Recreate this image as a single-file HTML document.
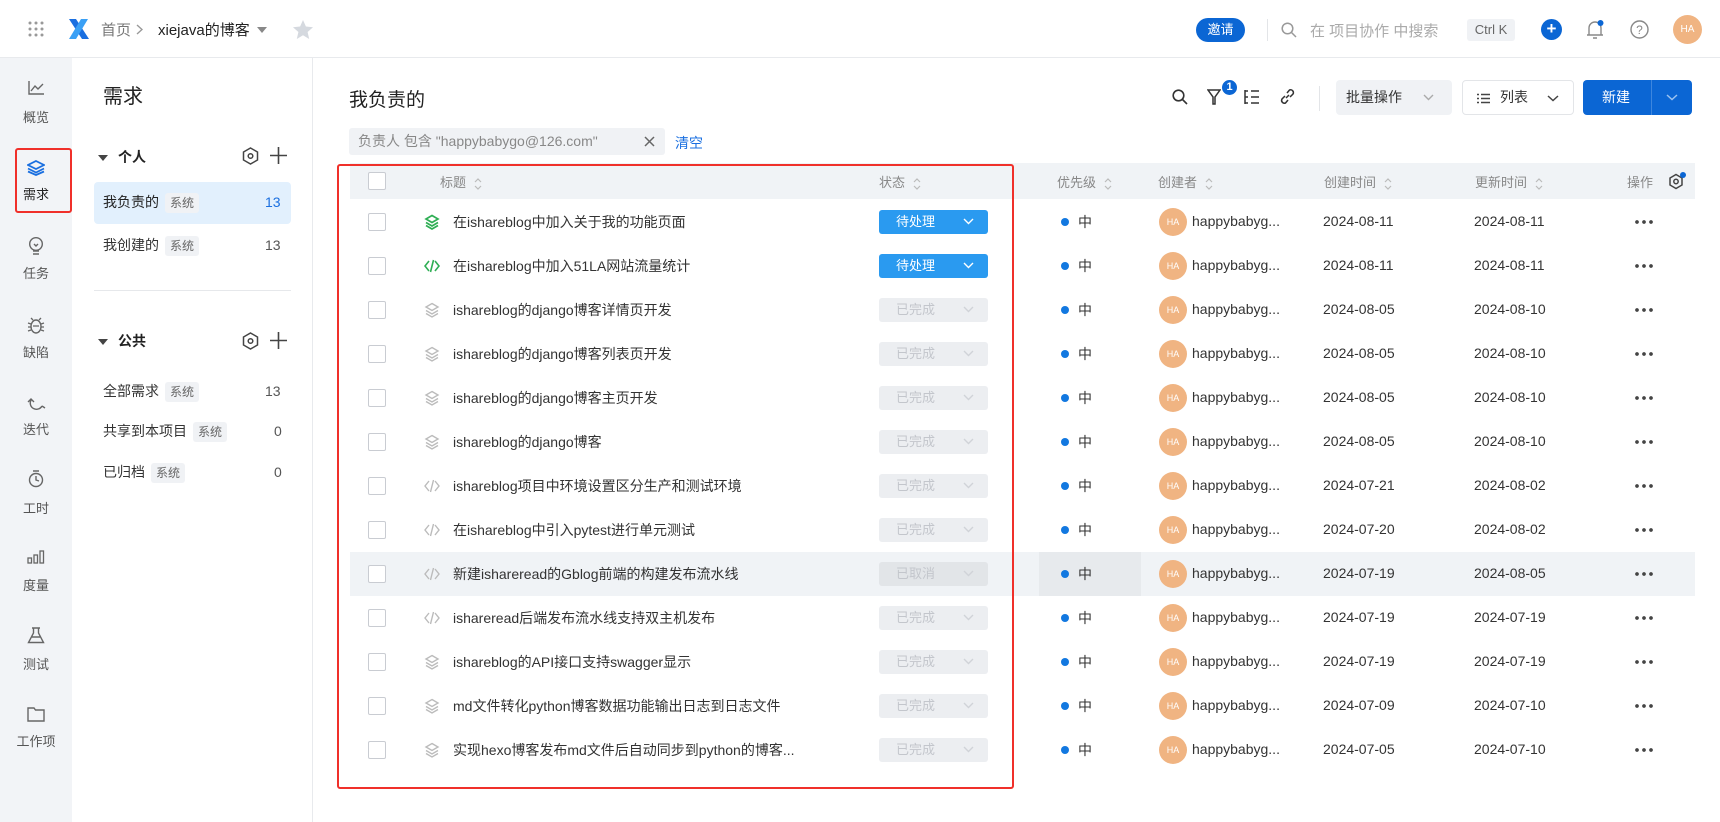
<!DOCTYPE html>
<html><head><meta charset="utf-8">
<style>
*{box-sizing:border-box;margin:0;padding:0}
body{width:1720px;height:822px;overflow:hidden;background:#fff;font-family:"Liberation Sans","Noto Sans CJK SC",sans-serif;color:#333;position:relative;font-size:14px}
.a{position:absolute}
.top{left:0;top:0;width:1720px;height:58px;border-bottom:1px solid #e8eaed;background:#fff}
.rail{left:0;top:58px;width:72px;height:764px;background:#f2f4f7}
.strip{left:0;top:0;width:3px;height:822px;background:linear-gradient(#2b6 0,#234 20%,#3a7 40%,#222 60%,#49c 80%,#333)}
.nav{left:72px;top:58px;width:241px;height:764px;border-right:1px solid #e8eaed;background:#fff}
.ni{width:72px;text-align:center;font-size:13px;color:#555;left:0}
.hdr{left:350px;top:163px;width:1345px;height:36px;background:#f0f3f6;font-size:13px;color:#888}
.row{left:350px;width:1345px;height:44px}
.cb{width:18px;height:18px;border:1px solid #c9ccd2;border-radius:2px;background:#fff;position:absolute;left:18px;top:13px}
.ttl{position:absolute;left:103px;top:12px;font-size:14px;color:#333;white-space:nowrap}
.ic{position:absolute;left:74px;top:14px}
.st{position:absolute;left:529px;top:10px;width:109px;height:24px;border-radius:3px;font-size:13px;line-height:24px;padding-left:17px}
.st.b{background:#2a9af0;color:#fff}
.st.g{background:#eceef1;color:#c3c6cc}
.st svg{position:absolute;right:14px;top:8px}
.dot{position:absolute;left:711px;top:18px;width:8px;height:8px;border-radius:50%;background:#1278e0}
.pr{position:absolute;left:728px;top:12px}
.av{position:absolute;left:809px;top:8px;width:28px;height:28px;border-radius:50%;background:#f0b482;color:#fff;font-size:9px;text-align:center;line-height:28px}
.nm{position:absolute;left:842px;top:13px;color:#333}
.d1{position:absolute;left:973px;top:13px}
.d2{position:absolute;left:1124px;top:13px}
.mo{position:absolute;left:1285px;top:20px;width:18px;height:4px;background:radial-gradient(circle at 2px 2px,#444 1.7px,transparent 2px) 0 0/7px 4px repeat-x}
.sort{display:inline-block;vertical-align:middle;margin-left:8px}
.tag{display:inline-block;background:#f0f2f5;color:#666;font-size:12px;padding:0 5px;border-radius:3px;margin-left:6px;line-height:20px}
</style></head><body>
<div class="a strip"></div>
<div class="a top">
  <svg class="a" style="left:28px;top:21px" width="16" height="16"><g fill="#999"><circle cx="2" cy="2" r="1.5"/><circle cx="8" cy="2" r="1.5"/><circle cx="14" cy="2" r="1.5"/><circle cx="2" cy="8" r="1.5"/><circle cx="8" cy="8" r="1.5"/><circle cx="14" cy="8" r="1.5"/><circle cx="2" cy="14" r="1.5"/><circle cx="8" cy="14" r="1.5"/><circle cx="14" cy="14" r="1.5"/></g></svg>
  <svg class="a" style="left:68px;top:17px" width="22" height="24"><path d="M1 2 L8 2 L21 22 L14 22 Z" fill="#1a6fe0"/><path d="M20 2 L13 2 L1 22 L8 22 Z" fill="#3aa0f5"/></svg>
  <div class="a" style="left:101px;top:19px;font-size:15px;color:#777">首页</div>
  <svg class="a" style="left:136px;top:24px" width="7" height="11"><path d="M1 1 L6 5.5 L1 10" fill="none" stroke="#999" stroke-width="1.4"/></svg>
  <div class="a" style="left:158px;top:19px;font-size:15px;color:#222">xiejava的博客</div>
  <svg class="a" style="left:257px;top:27px" width="10" height="6"><path d="M0 0 L10 0 L5 6Z" fill="#888"/></svg>
  <svg class="a" style="left:293px;top:20px" width="20" height="19"><path d="M10 0 L12.9 6.5 L20 7.2 L14.6 12 L16.2 19 L10 15.3 L3.8 19 L5.4 12 L0 7.2 L7.1 6.5Z" fill="#d5d9df"/></svg>
  <div class="a" style="left:1196px;top:18px;width:49px;height:24px;border-radius:12px;background:#0b66d4;color:#fff;font-size:13px;text-align:center;line-height:24px">邀请</div>
  <div class="a" style="left:1267px;top:19px;width:1px;height:22px;background:#e3e5e8"></div>
  <svg class="a" style="left:1281px;top:22px" width="16" height="16"><circle cx="6.5" cy="6.5" r="5.3" fill="none" stroke="#999" stroke-width="1.5"/><path d="M10.5 10.5 L15 15" stroke="#999" stroke-width="1.5"/></svg>
  <div class="a" style="left:1310px;top:20px;font-size:15px;color:#aaa">在 项目协作 中搜索</div>
  <div class="a" style="left:1467px;top:19px;width:48px;height:22px;border-radius:3px;background:#f0f2f5;color:#666;font-size:13px;text-align:center;line-height:22px">Ctrl K</div>
  <div class="a" style="left:1541px;top:19px;width:21px;height:21px;border-radius:50%;background:#0b66d4;color:#fff;text-align:center;line-height:20px;font-size:17px;font-weight:bold">+</div>
  <svg class="a" style="left:1586px;top:20px" width="18" height="20"><path d="M3 15 L3 8 A6 6 0 0 1 15 8 L15 15 Z M1 15 L17 15 M7 18 L11 18" fill="none" stroke="#888" stroke-width="1.4"/><circle cx="14.5" cy="3" r="3" fill="#0b66d4"/></svg>
  <svg class="a" style="left:1630px;top:20px" width="19" height="19"><circle cx="9.5" cy="9.5" r="8.5" fill="none" stroke="#888" stroke-width="1.4"/><text x="9.5" y="14" font-size="12" text-anchor="middle" fill="#888" font-family="Liberation Sans">?</text></svg>
  <div class="a" style="left:1673px;top:15px;width:29px;height:29px;border-radius:50%;background:#f0b482;color:#fff;font-size:10px;text-align:center;line-height:29px">HA</div>
</div>

<div class="a rail">
  <svg class="a" style="left:28px;top:23px" width="16" height="14"><path d="M1 0 L1 13 L16 13 M3 10 L7 5 L10 8 L15 3" fill="none" stroke="#666" stroke-width="1.4"/></svg>
  <div class="a ni" style="top:49px">概览</div>
  <svg class="a" style="left:27px;top:102px" width="18" height="16"><path d="M9 1 L17 5 L9 9 L1 5Z" fill="none" stroke="#1a6fe0" stroke-width="1.8"/><path d="M1 8.5 L9 12.5 L17 8.5 M1 11.5 L9 15 L17 11.5" fill="none" stroke="#1a6fe0" stroke-width="1.8"/></svg>
  <div class="a ni" style="top:126px;color:#222">需求</div>
  <svg class="a" style="left:28px;top:179px" width="16" height="19"><circle cx="8" cy="7" r="6.3" fill="none" stroke="#666" stroke-width="1.4"/><path d="M5 17 L11 17 M5 14 L11 14 M6 7 L8 9 L10 7" fill="none" stroke="#666" stroke-width="1.4"/></svg>
  <div class="a ni" style="top:205px">任务</div>
  <svg class="a" style="left:27px;top:259px" width="18" height="17"><ellipse cx="9" cy="9.5" rx="5" ry="6.5" fill="none" stroke="#666" stroke-width="1.4"/><path d="M1 6 L4 7 M1 10 L4 10 M1 14 L4 13 M17 6 L14 7 M17 10 L14 10 M17 14 L14 13 M6 3 L4 1 M12 3 L14 1 M6 9 L12 9" fill="none" stroke="#666" stroke-width="1.3"/></svg>
  <div class="a ni" style="top:284px">缺陷</div>
  <svg class="a" style="left:26px;top:336px" width="20" height="17"><path d="M5 6 A6 6 0 1 0 16 12 M2 8 L5 5 L8 8 M16 12 L19 14" fill="none" stroke="#666" stroke-width="1.4"/></svg>
  <div class="a ni" style="top:361px">迭代</div>
  <svg class="a" style="left:28px;top:412px" width="16" height="18"><circle cx="8" cy="10" r="6.5" fill="none" stroke="#666" stroke-width="1.4"/><path d="M5 1 L11 1 M8 6 L8 10 L11 11" fill="none" stroke="#666" stroke-width="1.4"/></svg>
  <div class="a ni" style="top:440px">工时</div>
  <svg class="a" style="left:27px;top:492px" width="18" height="14"><rect x="1" y="8" width="3.5" height="5" fill="none" stroke="#666" stroke-width="1.3"/><rect x="7" y="5" width="3.5" height="8" fill="none" stroke="#666" stroke-width="1.3"/><rect x="13" y="1" width="3.5" height="12" fill="none" stroke="#666" stroke-width="1.3"/></svg>
  <div class="a ni" style="top:517px">度量</div>
  <svg class="a" style="left:27px;top:569px" width="18" height="17"><path d="M5 1 L13 1 M6.5 1 L6.5 6 L1.5 15.5 L16.5 15.5 L11.5 6 L11.5 1 M4 10 L14 10" fill="none" stroke="#666" stroke-width="1.4"/></svg>
  <div class="a ni" style="top:596px">测试</div>
  <svg class="a" style="left:27px;top:649px" width="18" height="15"><path d="M1 1 L7 1 L8.5 3 L17 3 L17 14 L1 14 Z" fill="none" stroke="#666" stroke-width="1.4"/></svg>
  <div class="a ni" style="top:673px">工作项</div>
</div>
<div class="a" style="left:15px;top:148px;width:57px;height:65px;border:2px solid #f0302a;border-radius:3px"></div>

<div class="a nav">
  <div class="a" style="left:31px;top:22px;font-size:20px;color:#222">需求</div>
  <svg class="a" style="left:26px;top:97px" width="10" height="6"><path d="M0 0 L10 0 L5 6Z" fill="#444"/></svg>
  <div class="a" style="left:46px;top:89px;font-size:14px;color:#222;font-weight:bold">个人</div>
  <svg class="a" style="left:170px;top:89px" width="17" height="18"><path d="M8.5 1 L15.5 5 L15.5 13 L8.5 17 L1.5 13 L1.5 5Z" fill="none" stroke="#444" stroke-width="1.5"/><circle cx="8.5" cy="9" r="2.3" fill="none" stroke="#444" stroke-width="1.5"/></svg>
  <svg class="a" style="left:198px;top:89px" width="17" height="17"><path d="M8.5 0 L8.5 17 M0 8.5 L17 8.5" stroke="#444" stroke-width="1.6"/></svg>
  <div class="a" style="left:22px;top:124px;width:197px;height:42px;background:#e2f0fd;border-radius:4px"></div>
  <div class="a" style="left:31px;top:134px;color:#222">我负责的<span class="tag">系统</span></div>
  <div class="a" style="left:193px;top:136px;color:#1a6fe0">13</div>
  <div class="a" style="left:31px;top:177px;color:#333">我创建的<span class="tag">系统</span></div>
  <div class="a" style="left:193px;top:179px;color:#555">13</div>
  <div class="a" style="left:22px;top:232px;width:197px;height:1px;background:#e6e8eb"></div>
  <svg class="a" style="left:26px;top:281px" width="10" height="6"><path d="M0 0 L10 0 L5 6Z" fill="#444"/></svg>
  <div class="a" style="left:46px;top:273px;font-size:14px;color:#222;font-weight:bold">公共</div>
  <svg class="a" style="left:170px;top:274px" width="17" height="18"><path d="M8.5 1 L15.5 5 L15.5 13 L8.5 17 L1.5 13 L1.5 5Z" fill="none" stroke="#444" stroke-width="1.5"/><circle cx="8.5" cy="9" r="2.3" fill="none" stroke="#444" stroke-width="1.5"/></svg>
  <svg class="a" style="left:198px;top:274px" width="17" height="17"><path d="M8.5 0 L8.5 17 M0 8.5 L17 8.5" stroke="#444" stroke-width="1.6"/></svg>
  <div class="a" style="left:31px;top:323px;color:#333">全部需求<span class="tag">系统</span></div>
  <div class="a" style="left:193px;top:325px;color:#555">13</div>
  <div class="a" style="left:31px;top:363px;color:#333">共享到本项目<span class="tag">系统</span></div>
  <div class="a" style="left:202px;top:365px;color:#555">0</div>
  <div class="a" style="left:31px;top:404px;color:#333">已归档<span class="tag">系统</span></div>
  <div class="a" style="left:202px;top:406px;color:#555">0</div>
</div>

<!-- main header -->
<div class="a" style="left:349px;top:85px;font-size:19px;color:#222">我负责的</div>
<svg class="a" style="left:1172px;top:89px" width="16" height="16"><circle cx="6.5" cy="6.5" r="5.3" fill="none" stroke="#333" stroke-width="1.6"/><path d="M10.5 10.5 L15 15" stroke="#333" stroke-width="1.6"/></svg>
<svg class="a" style="left:1207px;top:89px" width="14" height="16"><path d="M1 1 L13 1 L8 8 L8 15 L6 15 L6 8 Z" fill="none" stroke="#333" stroke-width="1.5"/></svg>
<div class="a" style="left:1222px;top:80px;width:15px;height:15px;border-radius:50%;background:#0b66d4;color:#fff;font-size:11px;text-align:center;line-height:15px;font-weight:bold">1</div>
<svg class="a" style="left:1244px;top:89px" width="16" height="16"><path d="M1 1 L1 15 M1 2 L4 2 M1 8 L4 8 M1 14 L4 14 M7 2 L15 2 M7 8 L15 8 M7 14 L15 14" stroke="#333" stroke-width="1.5" fill="none"/></svg>
<svg class="a" style="left:1279px;top:88px" width="17" height="17"><path d="M7 10 L10 7 M6 8 L3 11 A2.8 2.8 0 0 0 6.5 15 L9 12 M11 9 L14 6 A2.8 2.8 0 0 0 10.5 2 L8 5" fill="none" stroke="#333" stroke-width="1.5"/></svg>
<div class="a" style="left:1319px;top:86px;width:1px;height:25px;background:#e3e5e8"></div>
<div class="a" style="left:1336px;top:80px;width:116px;height:35px;background:#f0f2f5;border-radius:4px;font-size:14px;line-height:35px;padding-left:10px;color:#333">批量操作<svg style="position:absolute;right:18px;top:14px" width="11" height="7"><path d="M1 1 L5.5 5.5 L10 1" fill="none" stroke="#aaa" stroke-width="1.4"/></svg></div>
<div class="a" style="left:1462px;top:80px;width:112px;height:35px;border:1px solid #e3e5e8;border-radius:4px;font-size:14px;line-height:33px;padding-left:37px;color:#333">列表
  <svg style="position:absolute;left:14px;top:12px" width="13" height="11"><path d="M0 1.5 L2 1.5 M4 1.5 L13 1.5 M0 5.5 L2 5.5 M4 5.5 L13 5.5 M0 9.5 L2 9.5 M4 9.5 L13 9.5" stroke="#444" stroke-width="1.4"/></svg>
  <svg style="position:absolute;right:14px;top:14px" width="12" height="7"><path d="M1 1 L6 5.5 L11 1" fill="none" stroke="#444" stroke-width="1.5"/></svg></div>
<div class="a" style="left:1583px;top:80px;width:109px;height:35px;background:#0b66d4;border-radius:4px;color:#fff;font-size:14px;line-height:35px;padding-left:19px">新建
  <div style="position:absolute;left:68px;top:0;width:1px;height:35px;background:#3d86de"></div>
  <svg style="position:absolute;right:14px;top:14px" width="12" height="7"><path d="M1 1 L6 5.5 L11 1" fill="none" stroke="#9cc3f0" stroke-width="1.5"/></svg></div>

<div class="a" style="left:349px;top:128px;width:316px;height:27px;background:#f0f2f5;border-radius:3px;font-size:14px;color:#888;line-height:27px;padding-left:9px">负责人 包含 "happybabygo@126.com"<svg style="position:absolute;right:10px;top:8px" width="11" height="11"><path d="M1 1 L10 10 M10 1 L1 10" stroke="#666" stroke-width="1.5"/></svg></div>
<div class="a" style="left:675px;top:133px;font-size:14px;color:#1a6fe0">清空</div>

<!-- table header -->
<div class="a hdr">
  <div class="cb" style="top:9px"></div>
  <div class="a" style="left:90px;top:9px">标题<svg class="sort" width="8" height="14"><path d="M1 5 L4 2 L7 5 M1 9 L4 12 L7 9" fill="none" stroke="#bbb" stroke-width="1.2"/></svg></div>
  <div class="a" style="left:529px;top:9px">状态<svg class="sort" width="8" height="14"><path d="M1 5 L4 2 L7 5 M1 9 L4 12 L7 9" fill="none" stroke="#bbb" stroke-width="1.2"/></svg></div>
  <div class="a" style="left:707px;top:9px">优先级<svg class="sort" width="8" height="14"><path d="M1 5 L4 2 L7 5 M1 9 L4 12 L7 9" fill="none" stroke="#bbb" stroke-width="1.2"/></svg></div>
  <div class="a" style="left:808px;top:9px">创建者<svg class="sort" width="8" height="14"><path d="M1 5 L4 2 L7 5 M1 9 L4 12 L7 9" fill="none" stroke="#bbb" stroke-width="1.2"/></svg></div>
  <div class="a" style="left:974px;top:9px">创建时间<svg class="sort" width="8" height="14"><path d="M1 5 L4 2 L7 5 M1 9 L4 12 L7 9" fill="none" stroke="#bbb" stroke-width="1.2"/></svg></div>
  <div class="a" style="left:1125px;top:9px">更新时间<svg class="sort" width="8" height="14"><path d="M1 5 L4 2 L7 5 M1 9 L4 12 L7 9" fill="none" stroke="#bbb" stroke-width="1.2"/></svg></div>
  <div class="a" style="left:1277px;top:9px">操作</div>
  <svg class="a" style="left:1318px;top:9px" width="18" height="19"><path d="M8 2.5 L14 6 L14 13 L8 16.5 L2 13 L2 6Z" fill="none" stroke="#444" stroke-width="1.5"/><circle cx="8" cy="9.5" r="2.2" fill="none" stroke="#444" stroke-width="1.5"/><circle cx="15" cy="3" r="3" fill="#0b66d4"/></svg>
</div>

<!-- rows -->
<div class="a row" style="top:200px"><div class="cb"></div><svg class="ic" width="16" height="16"><path d="M8 1.5 L14 5 L8 8.5 L2 5Z M2 8.5 L8 12 L14 8.5 M2 11.5 L8 15 L14 11.5" fill="none" stroke="#2fae54" stroke-width="1.7"/></svg><div class="ttl">在ishareblog中加入关于我的功能页面</div><div class="st b">待处理<svg width="11" height="7"><path d="M1 1 L5.5 5.5 L10 1" fill="none" stroke="#fff" stroke-width="1.4"/></svg></div><div class="dot"></div><div class="pr">中</div><div class="av">HA</div><div class="nm">happybabyg...</div><div class="d1">2024-08-11</div><div class="d2">2024-08-11</div><div class="mo"></div></div>
<div class="a row" style="top:244px"><div class="cb"></div><svg class="ic" width="16" height="16"><path d="M5 3 L1 8 L5 13 M11 3 L15 8 L11 13 M9.5 2 L6.5 14" fill="none" stroke="#2fae54" stroke-width="1.6"/></svg><div class="ttl">在ishareblog中加入51LA网站流量统计</div><div class="st b">待处理<svg width="11" height="7"><path d="M1 1 L5.5 5.5 L10 1" fill="none" stroke="#fff" stroke-width="1.4"/></svg></div><div class="dot"></div><div class="pr">中</div><div class="av">HA</div><div class="nm">happybabyg...</div><div class="d1">2024-08-11</div><div class="d2">2024-08-11</div><div class="mo"></div></div>
<div class="a row" style="top:288px"><div class="cb"></div><svg class="ic" width="16" height="16"><path d="M8 1.5 L14 5 L8 8.5 L2 5Z M2 8.5 L8 12 L14 8.5 M2 11.5 L8 15 L14 11.5" fill="none" stroke="#bbb" stroke-width="1.4"/></svg><div class="ttl">ishareblog的django博客详情页开发</div><div class="st g">已完成<svg width="11" height="7"><path d="M1 1 L5.5 5.5 L10 1" fill="none" stroke="#d0d3d8" stroke-width="1.4"/></svg></div><div class="dot"></div><div class="pr">中</div><div class="av">HA</div><div class="nm">happybabyg...</div><div class="d1">2024-08-05</div><div class="d2">2024-08-10</div><div class="mo"></div></div>
<div class="a row" style="top:332px"><div class="cb"></div><svg class="ic" width="16" height="16"><path d="M8 1.5 L14 5 L8 8.5 L2 5Z M2 8.5 L8 12 L14 8.5 M2 11.5 L8 15 L14 11.5" fill="none" stroke="#bbb" stroke-width="1.4"/></svg><div class="ttl">ishareblog的django博客列表页开发</div><div class="st g">已完成<svg width="11" height="7"><path d="M1 1 L5.5 5.5 L10 1" fill="none" stroke="#d0d3d8" stroke-width="1.4"/></svg></div><div class="dot"></div><div class="pr">中</div><div class="av">HA</div><div class="nm">happybabyg...</div><div class="d1">2024-08-05</div><div class="d2">2024-08-10</div><div class="mo"></div></div>
<div class="a row" style="top:376px"><div class="cb"></div><svg class="ic" width="16" height="16"><path d="M8 1.5 L14 5 L8 8.5 L2 5Z M2 8.5 L8 12 L14 8.5 M2 11.5 L8 15 L14 11.5" fill="none" stroke="#bbb" stroke-width="1.4"/></svg><div class="ttl">ishareblog的django博客主页开发</div><div class="st g">已完成<svg width="11" height="7"><path d="M1 1 L5.5 5.5 L10 1" fill="none" stroke="#d0d3d8" stroke-width="1.4"/></svg></div><div class="dot"></div><div class="pr">中</div><div class="av">HA</div><div class="nm">happybabyg...</div><div class="d1">2024-08-05</div><div class="d2">2024-08-10</div><div class="mo"></div></div>
<div class="a row" style="top:420px"><div class="cb"></div><svg class="ic" width="16" height="16"><path d="M8 1.5 L14 5 L8 8.5 L2 5Z M2 8.5 L8 12 L14 8.5 M2 11.5 L8 15 L14 11.5" fill="none" stroke="#bbb" stroke-width="1.4"/></svg><div class="ttl">ishareblog的django博客</div><div class="st g">已完成<svg width="11" height="7"><path d="M1 1 L5.5 5.5 L10 1" fill="none" stroke="#d0d3d8" stroke-width="1.4"/></svg></div><div class="dot"></div><div class="pr">中</div><div class="av">HA</div><div class="nm">happybabyg...</div><div class="d1">2024-08-05</div><div class="d2">2024-08-10</div><div class="mo"></div></div>
<div class="a row" style="top:464px"><div class="cb"></div><svg class="ic" width="16" height="16"><path d="M5 3 L1 8 L5 13 M11 3 L15 8 L11 13 M9.5 2 L6.5 14" fill="none" stroke="#bbb" stroke-width="1.4"/></svg><div class="ttl">ishareblog项目中环境设置区分生产和测试环境</div><div class="st g">已完成<svg width="11" height="7"><path d="M1 1 L5.5 5.5 L10 1" fill="none" stroke="#d0d3d8" stroke-width="1.4"/></svg></div><div class="dot"></div><div class="pr">中</div><div class="av">HA</div><div class="nm">happybabyg...</div><div class="d1">2024-07-21</div><div class="d2">2024-08-02</div><div class="mo"></div></div>
<div class="a row" style="top:508px"><div class="cb"></div><svg class="ic" width="16" height="16"><path d="M5 3 L1 8 L5 13 M11 3 L15 8 L11 13 M9.5 2 L6.5 14" fill="none" stroke="#bbb" stroke-width="1.4"/></svg><div class="ttl">在ishareblog中引入pytest进行单元测试</div><div class="st g">已完成<svg width="11" height="7"><path d="M1 1 L5.5 5.5 L10 1" fill="none" stroke="#d0d3d8" stroke-width="1.4"/></svg></div><div class="dot"></div><div class="pr">中</div><div class="av">HA</div><div class="nm">happybabyg...</div><div class="d1">2024-07-20</div><div class="d2">2024-08-02</div><div class="mo"></div></div>
<div class="a row" style="top:552px;background:#f0f3f6"><div class="a" style="left:689px;top:0;width:102px;height:44px;background:#e7eaed"></div><div class="cb"></div><svg class="ic" width="16" height="16"><path d="M5 3 L1 8 L5 13 M11 3 L15 8 L11 13 M9.5 2 L6.5 14" fill="none" stroke="#bbb" stroke-width="1.4"/></svg><div class="ttl">新建ishareread的Gblog前端的构建发布流水线</div><div class="st g" style="background:#e2e5e8">已取消<svg width="11" height="7"><path d="M1 1 L5.5 5.5 L10 1" fill="none" stroke="#d0d3d8" stroke-width="1.4"/></svg></div><div class="dot"></div><div class="pr">中</div><div class="av">HA</div><div class="nm">happybabyg...</div><div class="d1">2024-07-19</div><div class="d2">2024-08-05</div><div class="mo"></div></div>
<div class="a row" style="top:596px"><div class="cb"></div><svg class="ic" width="16" height="16"><path d="M5 3 L1 8 L5 13 M11 3 L15 8 L11 13 M9.5 2 L6.5 14" fill="none" stroke="#bbb" stroke-width="1.4"/></svg><div class="ttl">ishareread后端发布流水线支持双主机发布</div><div class="st g">已完成<svg width="11" height="7"><path d="M1 1 L5.5 5.5 L10 1" fill="none" stroke="#d0d3d8" stroke-width="1.4"/></svg></div><div class="dot"></div><div class="pr">中</div><div class="av">HA</div><div class="nm">happybabyg...</div><div class="d1">2024-07-19</div><div class="d2">2024-07-19</div><div class="mo"></div></div>
<div class="a row" style="top:640px"><div class="cb"></div><svg class="ic" width="16" height="16"><path d="M8 1.5 L14 5 L8 8.5 L2 5Z M2 8.5 L8 12 L14 8.5 M2 11.5 L8 15 L14 11.5" fill="none" stroke="#bbb" stroke-width="1.4"/></svg><div class="ttl">ishareblog的API接口支持swagger显示</div><div class="st g">已完成<svg width="11" height="7"><path d="M1 1 L5.5 5.5 L10 1" fill="none" stroke="#d0d3d8" stroke-width="1.4"/></svg></div><div class="dot"></div><div class="pr">中</div><div class="av">HA</div><div class="nm">happybabyg...</div><div class="d1">2024-07-19</div><div class="d2">2024-07-19</div><div class="mo"></div></div>
<div class="a row" style="top:684px"><div class="cb"></div><svg class="ic" width="16" height="16"><path d="M8 1.5 L14 5 L8 8.5 L2 5Z M2 8.5 L8 12 L14 8.5 M2 11.5 L8 15 L14 11.5" fill="none" stroke="#bbb" stroke-width="1.4"/></svg><div class="ttl">md文件转化python博客数据功能输出日志到日志文件</div><div class="st g">已完成<svg width="11" height="7"><path d="M1 1 L5.5 5.5 L10 1" fill="none" stroke="#d0d3d8" stroke-width="1.4"/></svg></div><div class="dot"></div><div class="pr">中</div><div class="av">HA</div><div class="nm">happybabyg...</div><div class="d1">2024-07-09</div><div class="d2">2024-07-10</div><div class="mo"></div></div>
<div class="a row" style="top:728px"><div class="cb"></div><svg class="ic" width="16" height="16"><path d="M8 1.5 L14 5 L8 8.5 L2 5Z M2 8.5 L8 12 L14 8.5 M2 11.5 L8 15 L14 11.5" fill="none" stroke="#bbb" stroke-width="1.4"/></svg><div class="ttl">实现hexo博客发布md文件后自动同步到python的博客...</div><div class="st g">已完成<svg width="11" height="7"><path d="M1 1 L5.5 5.5 L10 1" fill="none" stroke="#d0d3d8" stroke-width="1.4"/></svg></div><div class="dot"></div><div class="pr">中</div><div class="av">HA</div><div class="nm">happybabyg...</div><div class="d1">2024-07-05</div><div class="d2">2024-07-10</div><div class="mo"></div></div>

<div class="a" style="left:337px;top:164px;width:677px;height:625px;border:2px solid #f0302a;border-radius:3px"></div>
</body></html>
